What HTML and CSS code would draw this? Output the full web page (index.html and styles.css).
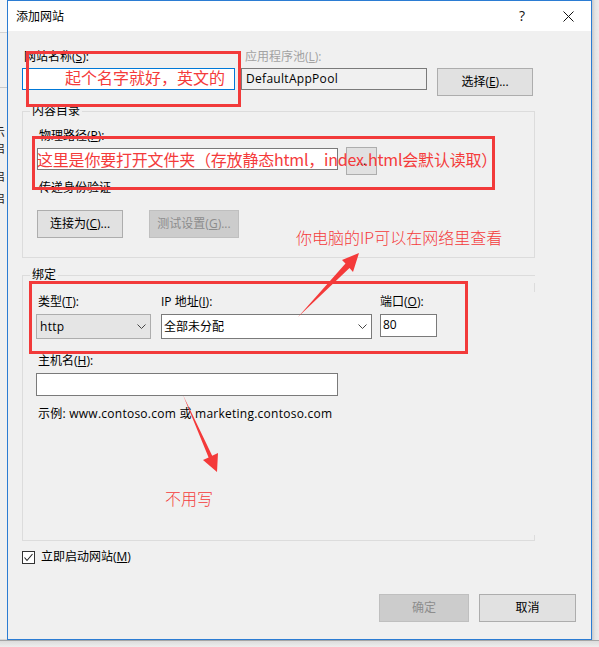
FILE: index.html
```html
<!DOCTYPE html>
<html lang="zh-CN">
<head>
<meta charset="utf-8">
<title>添加网站</title>
<link rel="stylesheet" href="styles.css">
</head>
<body>
<div class="screen">
  <div class="desk-left">
    <div class="desk-top"></div>
    <div class="desk-band"></div>
    <div class="desk-frags">
      <span class="frag f1">示</span>
      <span class="frag f2">启</span>
      <span class="frag f3">启</span>
      <span class="frag f4">启</span>
    </div>
  </div>
  <div class="window">
    <div class="titlebar">
      <span class="title">添加网站</span>
      <span class="cap-btn help">?</span>
      <span class="cap-btn close"><svg width="11" height="11" viewBox="0 0 11 11"><path d="M0.5 0.5L10.5 10.5M10.5 0.5L0.5 10.5" stroke="#111" stroke-width="1" fill="none"/></svg></span>
    </div>
    <div class="content">
      <div class="site-grid">
        <div class="lbl gc1">网站名称(<u>S</u>):</div>
        <div class="lbl gc3 dim pool-lbl">应用程序池(<u>L</u>):</div>
        <div class="field gc1 focus"></div>
        <div class="field gc3 ro">DefaultAppPool</div>
        <div class="btn gc5 pick">选择(<u>E</u>)...</div>
      </div>

      <fieldset class="group g1">
        <legend>内容目录</legend>
        <div class="lbl">物理路径(<u>P</u>):</div>
        <div class="path-row">
          <div class="field path"></div>
          <div class="btn browse">...</div>
        </div>
        <div class="lbl auth-lbl">传递身份验证</div>
        <div class="auth-row">
          <div class="btn connect">连接为(<u>C</u>)...</div>
          <div class="btn off test">测试设置(<u>G</u>)...</div>
        </div>
      </fieldset>

      <fieldset class="group g2">
        <legend>绑定</legend>
        <div class="bind-row">
          <div class="bcol bc1">
            <div class="lbl">类型(<u>T</u>):</div>
            <div class="combo gray"><span>http</span><svg class="chev" width="9" height="5" viewBox="0 0 9 5"><path d="M0.5 0.5L4.5 4.5L8.5 0.5" stroke="#444" stroke-width="1" fill="none"/></svg></div>
          </div>
          <div class="bcol bc2">
            <div class="lbl ip-lbl">IP 地址(<u>I</u>):</div>
            <div class="combo white"><span>全部未分配</span><svg class="chev" width="9" height="5" viewBox="0 0 9 5"><path d="M0.5 0.5L4.5 4.5L8.5 0.5" stroke="#444" stroke-width="1" fill="none"/></svg></div>
          </div>
          <div class="bcol bc3">
            <div class="lbl port-lbl">端口(<u>O</u>):</div>
            <div class="field port">80</div>
          </div>
        </div>
        <div class="lbl host-lbl">主机名(<u>H</u>):</div>
        <div class="field host"></div>
        <div class="example">示例: www.contoso.com 或 marketing.contoso.com</div>
      </fieldset>

      <div class="check-row">
        <span class="checkbox"><svg width="11" height="11" viewBox="0 0 11 11"><path d="M1.5 5.5L4 8.5L9.5 2" stroke="#222" stroke-width="1.1" fill="none"/></svg></span>
        <span>立即启动网站(<u>M</u>)</span>
      </div>

      <div class="footer">
        <div class="btn off ok">确定</div>
        <div class="btn cancel">取消</div>
      </div>
    </div>

    <div class="mark m1"></div>
    <div class="mark m2"></div>
    <div class="mark m3"></div>
    <div class="note n1">起个名字就好，英文的</div>
    <div class="note n2">这里是你要打开文件夹（存放静态html，index.html会默认读取）</div>
    <div class="note thin n3">你电脑的IP可以在网络里查看</div>
    <div class="note thin n4">不用写</div>
    <svg class="arrows" width="583" height="638" viewBox="8 1 583 638">
      <polygon points="298,317 345.5,263.5 342,260 359,253 353,272 349.5,268" fill="#f43a3a"/>
      <polygon points="183,395 208.6,457.5 203,460 217,472 218,453 212.2,455.8" fill="#f43a3a"/>
    </svg>
  </div>
  <div class="desk-right"></div>
</div>
<div class="desk-bottom"></div>
</body>
</html>
```

FILE: styles.css
```css
* { box-sizing: border-box; }
html, body { margin: 0; padding: 0; }
body {
  width: 599px;
  height: 647px;
  overflow: hidden;
  background: #ebebeb;
  font-family: "Open Sans", "Noto Sans CJK SC", sans-serif;
  font-size: 12px;
  line-height: 16px;
  color: #000;
}
u { text-decoration: underline; text-underline-offset: 1px; }

.screen { display: flex; height: 640px; }

/* background desktop/window edges */
.desk-left {
  width: 7px;
  flex: none;
  background: #f0f0f0;
  overflow: hidden;
  border-bottom: 1px solid #d6d6d6;
}
.desk-top { height: 33px; background: #f7f7f7; border-bottom: 1px solid #d4d4d4; }
.desk-band { height: 55px; border-bottom: 1px solid #c9c9c9; }
.desk-frags { display: flex; flex-direction: column; padding-top: 36px; }
.frag { display: block; margin-left: -7px; line-height: 16px; color: #222; white-space: nowrap; font-family: "Noto Sans CJK SC", sans-serif; }
.f3 { margin-top: 12px; }
.f4 { margin-top: 6px; }

.desk-right {
  width: 7px;
  flex: none;
  background: linear-gradient(to right, #c9c9c9, #e3e3e3 3px, #ececec);
}
.desk-bottom {
  height: 7px;
  border-top: 1px solid #a5a5a5;
  background: linear-gradient(to bottom, #dcdcdc, #eeeeee);
}

/* dialog window */
.window {
  position: relative;
  flex: none;
  width: 585px;
  height: 640px;
  border: 1px solid #2b7cd3;
  background: #f0f0f0;
  display: flex;
  flex-direction: column;
}
.titlebar {
  flex: none;
  height: 30px;
  background: #fff;
  display: flex;
  align-items: center;
  padding-left: 8px;
}
.title { flex: 1; font-family: "Noto Sans CJK SC", sans-serif; }
.cap-btn {
  width: 46px;
  height: 30px;
  display: flex;
  align-items: center;
  justify-content: center;
}
.help { font-size: 14px; color: #111; }

.content {
  flex: 1;
  display: flex;
  flex-direction: column;
  align-items: flex-start;
  padding-left: 14px;
}

.lbl { padding-left: 2px; white-space: nowrap; }
.dim { color: #a2a2a2; }

.field {
  height: 22px;
  border: 1px solid #7a7a7a;
  background: #fff;
  padding: 0 4px;
  line-height: 20px;
  white-space: nowrap;
}
.focus { border-color: #0078d7; }
.ro { background: #f0f0f0; letter-spacing: 0.3px; }

.btn {
  height: 28px;
  border: 1px solid #adadad;
  background: #e1e1e1;
  display: flex;
  align-items: center;
  justify-content: center;
  white-space: nowrap;
}
.btn.off { background: #cccccc; border-color: #bfbfbf; color: #8d8d8d; }

/* site row */
.site-grid {
  margin-top: 18px;
  display: grid;
  grid-template-columns: 213px 6px 186px 10px 96px;
  grid-template-rows: 16px auto;
  row-gap: 3px;
  align-items: start;
}
.gc1 { grid-column: 1; }
.gc3 { grid-column: 3; }
.gc5 { grid-column: 5; }
.pool-lbl { padding-left: 4px; }

/* group boxes */
.group {
  margin: 0;
  width: 513px;
  min-width: 0;
  border: 1px solid #dcdcdc;
}
.group legend { padding: 0 2px; line-height: 16px; }
.g1 { margin-top: 7px; padding: 9px 0 19px 14px; }
.g1 legend { margin-left: -7px; }
.g2 {
  margin-top: 9px;
  padding: 11px 0 118px 13px;
  border-right: none;
  position: relative;
}
.g2 legend { margin-left: -6px; }
.g2::before, .g2::after {
  content: "";
  position: absolute;
  right: 0;
  width: 1px;
  background: #dcdcdc;
}
.g2::before { top: 0; height: 9px; }
.g2::after { bottom: 0; height: 5px; }

.path-row { margin-top: 3px; display: flex; align-items: flex-start; gap: 8px; }
.path { width: 301px; margin-top: 1px; }
.browse { width: 31px; }
.auth-lbl { margin-top: 5px; }
.auth-row { margin-top: 14px; display: flex; gap: 26px; }
.connect { width: 86px; }
.test { width: 90px; }

.bind-row { display: flex; align-items: flex-start; }
.bcol { display: flex; flex-direction: column; gap: 4px; }
.bc1 { width: 115px; margin-right: 10px; }
.bc2 { width: 211px; margin-right: 8px; }
.bc3 { width: 57px; }
.ip-lbl, .port-lbl { padding-left: 0; }
.combo {
  height: 25px;
  display: flex;
  align-items: center;
  justify-content: space-between;
  padding: 0 4px 0 3px;
}
.combo.gray { background: #e5e5e5; border: 1px solid #adadad; letter-spacing: 0.3px; }
.combo.white { background: #fff; border: 1px solid #7a7a7a; padding-left: 2px; }
.chev { display: block; }
.port { height: 23px; padding-left: 2px; }
.host-lbl { margin-top: 14px; }
.host { margin-top: 4px; width: 302px; height: 23px; }
.example { margin-top: 10px; padding-left: 2px; white-space: nowrap; letter-spacing: 0.25px; }

.check-row { margin-top: 8px; display: flex; align-items: center; gap: 6px; }
.checkbox {
  width: 13px;
  height: 13px;
  border: 1px solid #333;
  background: #fff;
  display: flex;
  align-items: center;
  justify-content: center;
}

.footer {
  align-self: stretch;
  margin-top: 29px;
  display: flex;
  justify-content: flex-end;
  gap: 10px;
  padding-right: 15px;
}
.ok { width: 90px; }
.cancel { width: 97px; }

/* annotations drawn over the screenshot */
.mark { position: absolute; border: 3px solid #f23a3a; pointer-events: none; }
.m1 { left: 18px; top: 50px; width: 215px; height: 56px; }
.m2 { left: 24px; top: 135px; width: 463px; height: 54px; }
.m3 { left: 21px; top: 280px; width: 439px; height: 73px; }

.note {
  position: absolute;
  color: #f43b3b;
  font-family: "Noto Sans CJK SC", sans-serif;
  font-size: 16px;
  line-height: 20px;
  white-space: nowrap;
  pointer-events: none;
}
.note.thin { font-weight: 300; }
.n1 { left: 57px; top: 66px; }
.n2 { left: 29px; top: 148px; letter-spacing: -0.2px; }
.n3 { left: 288px; top: 226px; }
.n4 { left: 157px; top: 487px; }

.arrows { position: absolute; left: 0; top: 0; pointer-events: none; }
```
